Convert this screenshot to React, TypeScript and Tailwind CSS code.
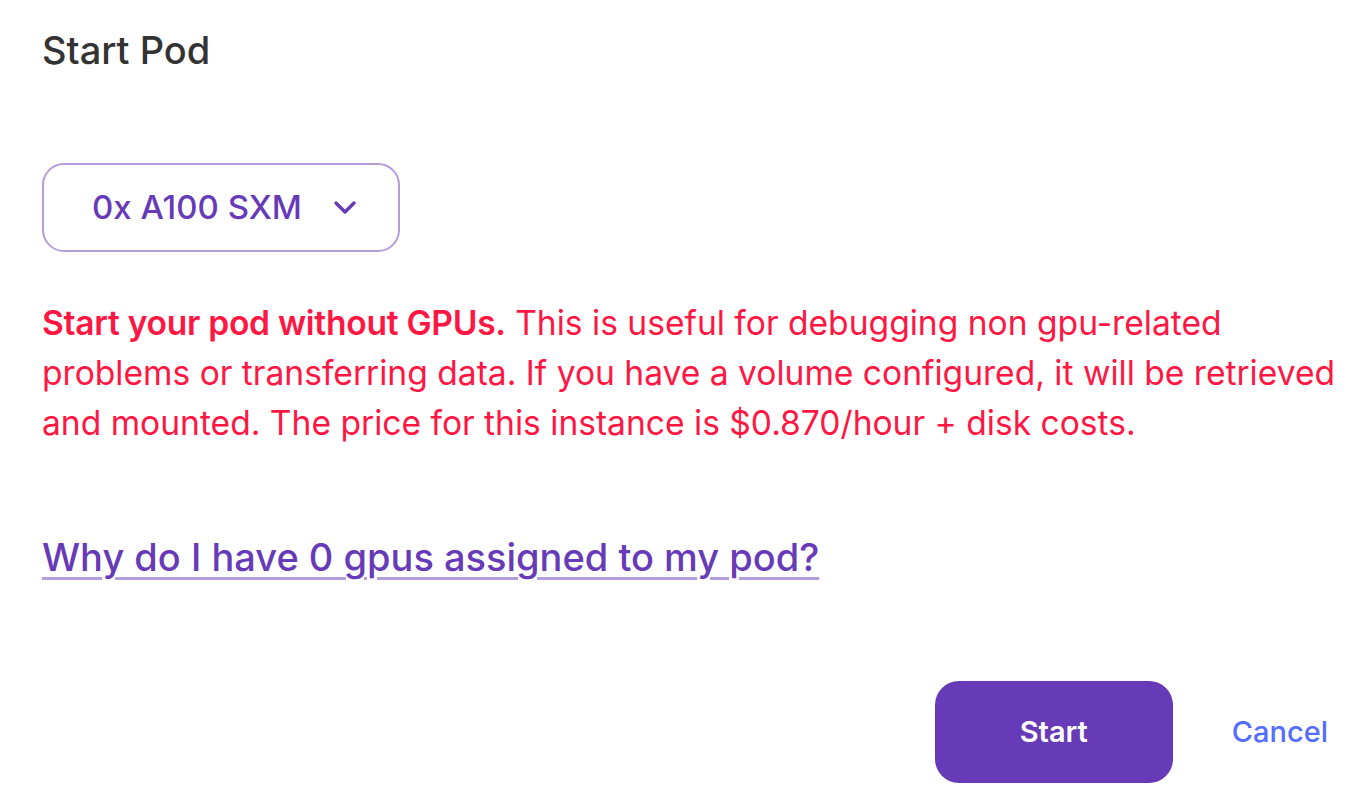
export default function App() {
  return (
    <div
      className="min-h-screen bg-white pl-[42px] pr-[42px] pt-[26px]"
      style={{ fontFamily: "Inter, 'Noto Sans', sans-serif" }}
    >
      <h1 className="text-[38px] leading-[48px] font-medium text-[#333333]">Start Pod</h1>

      <button className="mt-[89px] flex h-[89px] w-[358px] items-center rounded-[22px] border-2 border-[#b39ddb] bg-white pl-[48px]">
        <span className="text-[33px] font-medium text-[#673ab7]">0x A100 SXM</span>
        <svg
          className="ml-[31px]"
          width="24"
          height="16"
          viewBox="0 0 24 16"
          fill="none"
          stroke="#673ab7"
          strokeWidth="3.4"
          strokeLinecap="round"
          strokeLinejoin="round"
        >
          <path d="M3 3l9 9 9-9" />
        </svg>
      </button>

      <p className="mt-[46px] mr-[-30px] max-w-[1318px] text-[33.6px] leading-[50px] text-[#ff1744]">
        <span className="font-semibold tracking-[-0.28px]">Start your pod without GPUs.</span> This is useful for
        debugging non gpu-related problems or transferring data. If you have a volume configured, it will be
        retrieved and mounted. The price for this instance is $0.870/hour + disk costs.
      </p>

      <a
        href="#"
        className="mt-[81px] inline-block text-[38px] font-medium text-[#673ab7] underline decoration-[#b39ddb] decoration-[3px] underline-offset-[6px]"
      >
        Why do I have 0 gpus assigned to my pod?
      </a>

      <div className="mt-[95px] flex items-center justify-end gap-[59px]">
        <button className="h-[102px] w-[238px] rounded-[24px] bg-[#673ab7] text-[29px] font-semibold text-white">
          Start
        </button>
        <button className="text-[29px] font-medium text-[#536dfe]">Cancel</button>
      </div>
    </div>
  );
}
